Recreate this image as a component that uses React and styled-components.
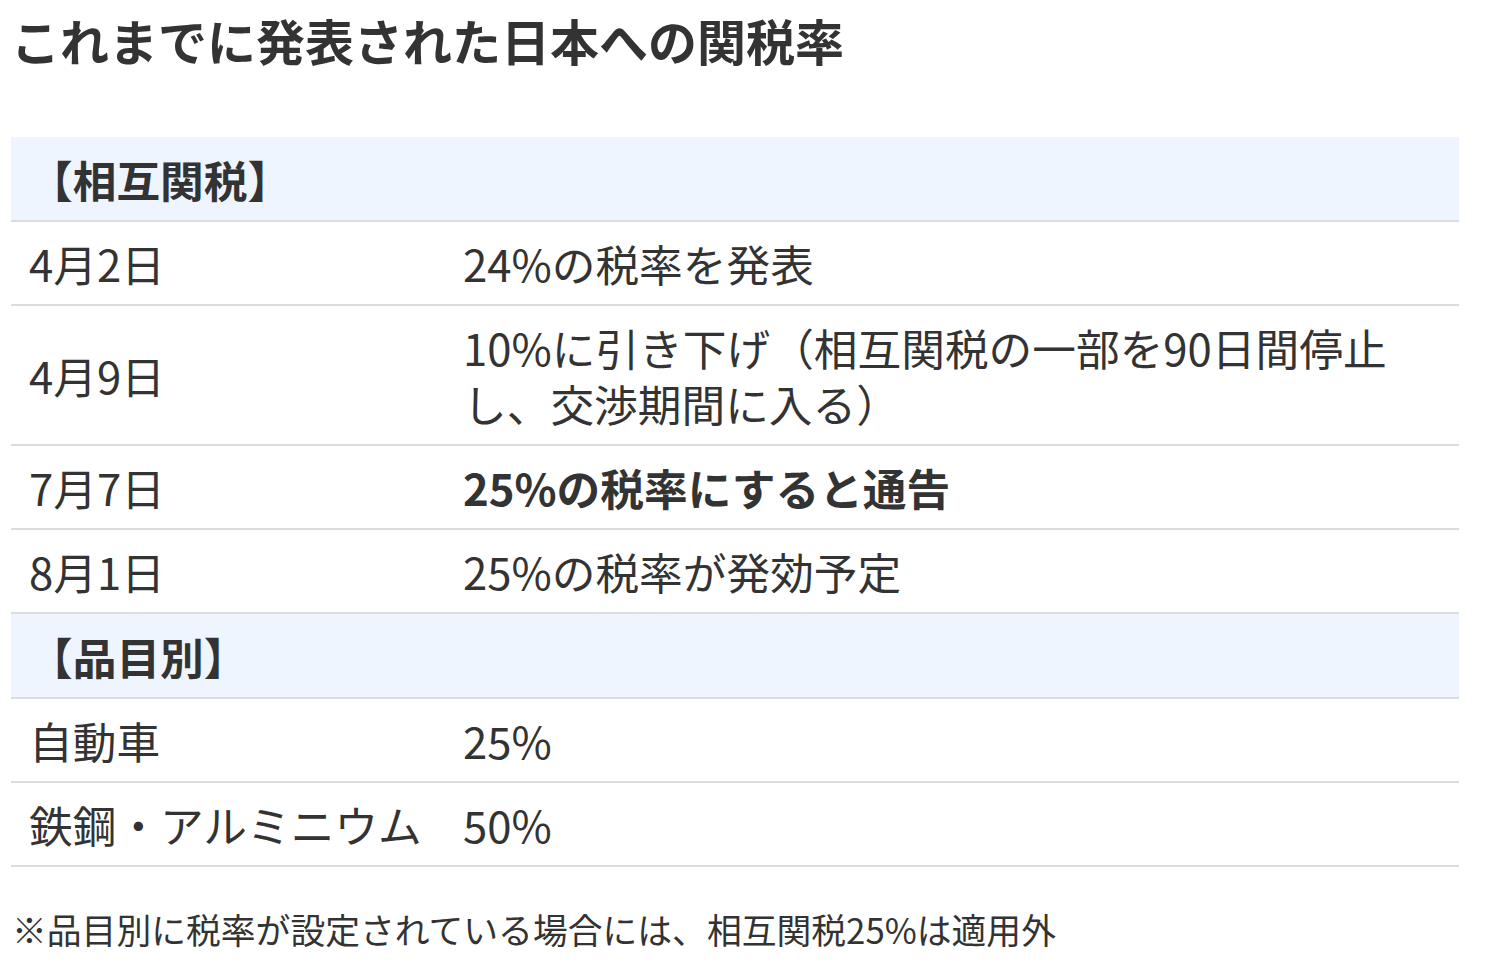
import React from "react";
import styled, { createGlobalStyle } from "styled-components";

const GlobalStyle = createGlobalStyle`
  body {
    margin: 0;
    background: #fff;
    font-family: "Noto Sans CJK JP", "Noto Sans", sans-serif;
    color: #333;
  }
`;

const Page = styled.div`
  padding: 8px 28px 0 11px;
`;

const Title = styled.h2`
  margin: 0 0 65px 0;
  font-size: 49px;
  line-height: 64px;
  font-weight: 700;
`;

const Table = styled.table`
  width: 1448px;
  border-collapse: collapse;
  font-size: 43.7px;
  line-height: 56px;
`;

const Row = styled.tr`
  border-bottom: 2px solid #dcdcdc;
  background: ${(p) => (p.$section ? "#eef5fe" : "#fff")};
`;

const SectionCell = styled.th`
  text-align: left;
  font-weight: 700;
  padding: 14px 18px 13px;
`;

const DateCell = styled.td`
  width: 416px;
  padding: 13px 18px;
  vertical-align: middle;
`;

const DescCell = styled.td`
  padding: 13px 50px 13px 0;
  font-weight: ${(p) => (p.$strong ? 700 : 400)};
`;

const Note = styled.p`
  margin: 38px 0 0 1px;
  font-size: 34.8px;
  line-height: 48px;
`;

const sections = [
  {
    label: "【相互関税】",
    rows: [
      { date: "4月2日", text: "24%の税率を発表" },
      {
        date: "4月9日",
        text: "10%に引き下げ（相互関税の一部を90日間停止し、交渉期間に入る）",
      },
      { date: "7月7日", text: "25%の税率にすると通告", strong: true },
      { date: "8月1日", text: "25%の税率が発効予定" },
    ],
  },
  {
    label: "【品目別】",
    rows: [
      { date: "自動車", text: "25%" },
      { date: "鉄鋼・アルミニウム", text: "50%" },
    ],
  },
];

export default function App() {
  return (
    <Page>
      <GlobalStyle />
      <Title>これまでに発表された日本への関税率</Title>
      <Table>
        <tbody>
          {sections.map((s) => (
            <React.Fragment key={s.label}>
              <Row $section>
                <SectionCell colSpan={2}>{s.label}</SectionCell>
              </Row>
              {s.rows.map((r) => (
                <Row key={r.date}>
                  <DateCell>{r.date}</DateCell>
                  <DescCell $strong={r.strong}>{r.text}</DescCell>
                </Row>
              ))}
            </React.Fragment>
          ))}
        </tbody>
      </Table>
      <Note>※品目別に税率が設定されている場合には、相互関税25%は適用外</Note>
    </Page>
  );
}
